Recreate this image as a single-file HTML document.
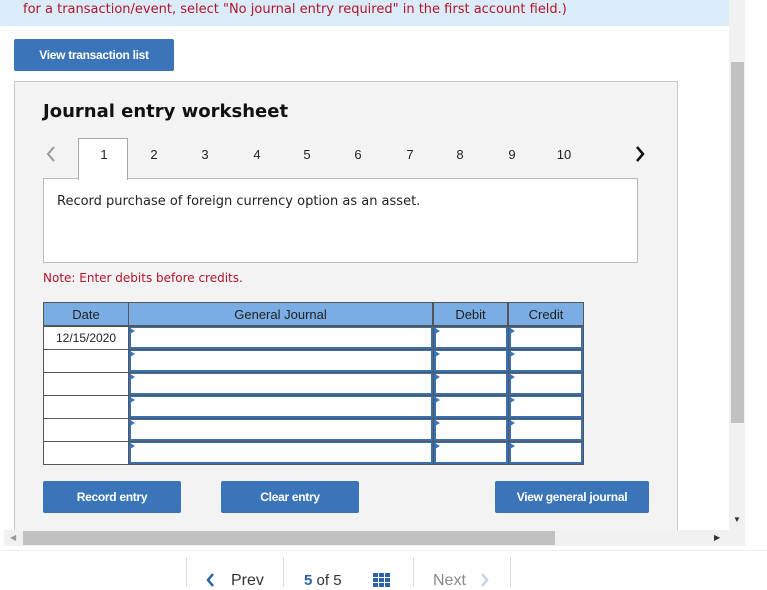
<html><head><style>
body{margin:0;width:767px;height:587px;overflow:hidden;background:#fff;font-family:"Liberation Sans",sans-serif;position:relative}
.a{position:absolute}
.btn{position:absolute;background:#3a75b9;color:#fff;font-size:12px;font-weight:bold;text-align:center;border-radius:2px;letter-spacing:-0.3px}
.tab{position:absolute;top:147px;font-size:13px;color:#222;width:20px;text-align:center}
.cell{position:absolute;background:#fff;box-sizing:border-box}
.tri{position:absolute;width:0;height:0;border-top:3px solid transparent;border-bottom:3px solid transparent;border-left:5px solid #3a75b9}
</style></head><body>
<div class="a" style="left:0;top:0;width:729px;height:26px;background:#dbebf8"></div>
<div class="a" style="left:23px;top:2px;font-family:'DejaVu Sans',sans-serif;font-size:13px;color:#b0162a">for a transaction/event, select "No journal entry required" in the first account field.)</div>
<div class="btn" style="left:14px;top:39px;width:160px;height:32px;line-height:32px">View transaction list</div>
<div class="a" style="left:14px;top:81px;width:662px;height:460px;background:#f3f3f3;border:1px solid #c8c8c8;border-bottom:none"></div>
<div class="a" style="left:43px;top:101px;font-family:'DejaVu Sans',sans-serif;font-weight:bold;font-size:18px;color:#111">Journal entry worksheet</div>
<svg class="a" style="left:45px;top:145px" width="12" height="18"><path d="M9 2 L3 9 L9 16" stroke="#999" stroke-width="2" fill="none"/></svg>
<svg class="a" style="left:634px;top:145px" width="12" height="18"><path d="M3 2 L9 9 L3 16" stroke="#111" stroke-width="2.5" fill="none"/></svg>
<div class="a" style="left:78px;top:138px;width:50px;height:42px;background:#fff;border:1px solid #aaa;border-bottom:none;box-sizing:border-box;z-index:2"></div>
<div class="tab" style="left:94px;z-index:3">1</div><div class="tab" style="left:144px">2</div><div class="tab" style="left:195px">3</div><div class="tab" style="left:247px">4</div><div class="tab" style="left:297px">5</div><div class="tab" style="left:348px">6</div><div class="tab" style="left:400px">7</div><div class="tab" style="left:450px">8</div><div class="tab" style="left:502px">9</div><div class="tab" style="left:553px;width:22px">10</div>
<div class="a" style="left:43px;top:178px;width:595px;height:85px;background:#fff;border:1px solid #bbb;box-sizing:border-box"></div>
<div class="a" style="left:57px;top:194px;font-family:'DejaVu Sans',sans-serif;font-size:13px;color:#222">Record purchase of foreign currency option as an asset.</div>
<div class="a" style="left:43px;top:271px;font-family:'DejaVu Sans',sans-serif;font-size:12px;color:#b0162a">Note: Enter debits before credits.</div>
<div class="a" style="left:43px;top:302px;width:541px;height:163px;background:#555"></div>
<div class="a" style="left:44px;top:303px;width:84px;height:22px;background:#7aade3"></div>
<div class="a" style="left:129px;top:303px;width:303px;height:22px;background:#7aade3"></div>
<div class="a" style="left:434px;top:303px;width:73px;height:22px;background:#7aade3"></div>
<div class="a" style="left:509px;top:303px;width:74px;height:22px;background:#7aade3"></div>
<div class="a" style="left:44px;top:307px;width:84px;text-align:center;font-size:13px;color:#222">Date</div>
<div class="a" style="left:129px;top:307px;width:303px;text-align:center;font-size:13px;color:#222">General Journal</div>
<div class="a" style="left:434px;top:307px;width:73px;text-align:center;font-size:13px;color:#222">Debit</div>
<div class="a" style="left:509px;top:307px;width:74px;text-align:center;font-size:13px;color:#222">Credit</div>
<div id="rows"></div>
<script>
var h='';for(var i=0;i<6;i++){var y=327+i*23;
h+='<div class="cell" style="left:44px;top:'+y+'px;width:84px;height:22px;font-size:12px;text-align:center;line-height:22px;color:#222">'+(i==0?'12/15/2020':'')+'</div>';
[[129,304],[434,74],[509,74]].forEach(function(c){h+='<div class="cell" style="left:'+c[0]+'px;top:'+y+'px;width:'+c[1]+'px;height:22px;border:2px solid #3a6fb0;border-top-width:1px"></div><div class="tri" style="left:'+(c[0]+1)+'px;top:'+(y+1)+'px"></div>';});}
document.getElementById('rows').innerHTML=h;
</script>
<div class="btn" style="left:43px;top:481px;width:138px;height:32px;line-height:32px">Record entry</div>
<div class="btn" style="left:221px;top:481px;width:138px;height:32px;line-height:32px">Clear entry</div>
<div class="btn" style="left:495px;top:481px;width:154px;height:32px;line-height:32px">View general journal</div>
<div class="a" style="left:729px;top:0;width:16px;height:530px;background:#f1f1f1"></div>
<div class="a" style="left:731px;top:62px;width:13px;height:361px;background:#c1c1c1"></div>
<div class="a" style="left:733px;top:515px;font-size:8px;color:#333">&#9660;</div>
<div class="a" style="left:4px;top:530px;width:741px;height:16px;background:#f1f1f1"></div>
<div class="a" style="left:23px;top:531px;width:532px;height:14px;background:#c1c1c1"></div>
<div class="a" style="left:10px;top:533px;font-size:8px;color:#999">&#9664;</div>
<div class="a" style="left:714px;top:533px;font-size:8px;color:#333">&#9654;</div>
<div class="a" style="left:0;top:550px;width:767px;height:1px;background:#eee"></div>
<div class="a" style="left:186px;top:557px;width:1px;height:30px;background:#ddd"></div>
<div class="a" style="left:283px;top:557px;width:1px;height:30px;background:#ddd"></div>
<div class="a" style="left:413px;top:557px;width:1px;height:30px;background:#ddd"></div>
<div class="a" style="left:510px;top:557px;width:1px;height:30px;background:#ddd"></div>
<svg class="a" style="left:205px;top:573px" width="10" height="14"><path d="M8 1 L3 7 L8 13" stroke="#2a62a8" stroke-width="2.5" fill="none"/></svg>
<div class="a" style="left:231px;top:572px;font-size:16px;color:#333">Prev</div>
<div class="a" style="left:304px;top:572px;font-size:15px;color:#333"><b style="color:#2a62a8">5</b> of 5</div>
<svg class="a" style="left:373px;top:573px" width="17" height="14"><g fill="#2a62a8"><rect x="0" y="0" width="5" height="4"/><rect x="6" y="0" width="5" height="4"/><rect x="12" y="0" width="5" height="4"/><rect x="0" y="5" width="5" height="4"/><rect x="6" y="5" width="5" height="4"/><rect x="12" y="5" width="5" height="4"/><rect x="0" y="10" width="5" height="4"/><rect x="6" y="10" width="5" height="4"/><rect x="12" y="10" width="5" height="4"/></g></svg>
<div class="a" style="left:433px;top:572px;font-size:16px;color:#888">Next</div>
<svg class="a" style="left:480px;top:573px" width="10" height="14"><path d="M2 1 L7 7 L2 13" stroke="#c5d5ea" stroke-width="2.5" fill="none"/></svg>
</body></html>
